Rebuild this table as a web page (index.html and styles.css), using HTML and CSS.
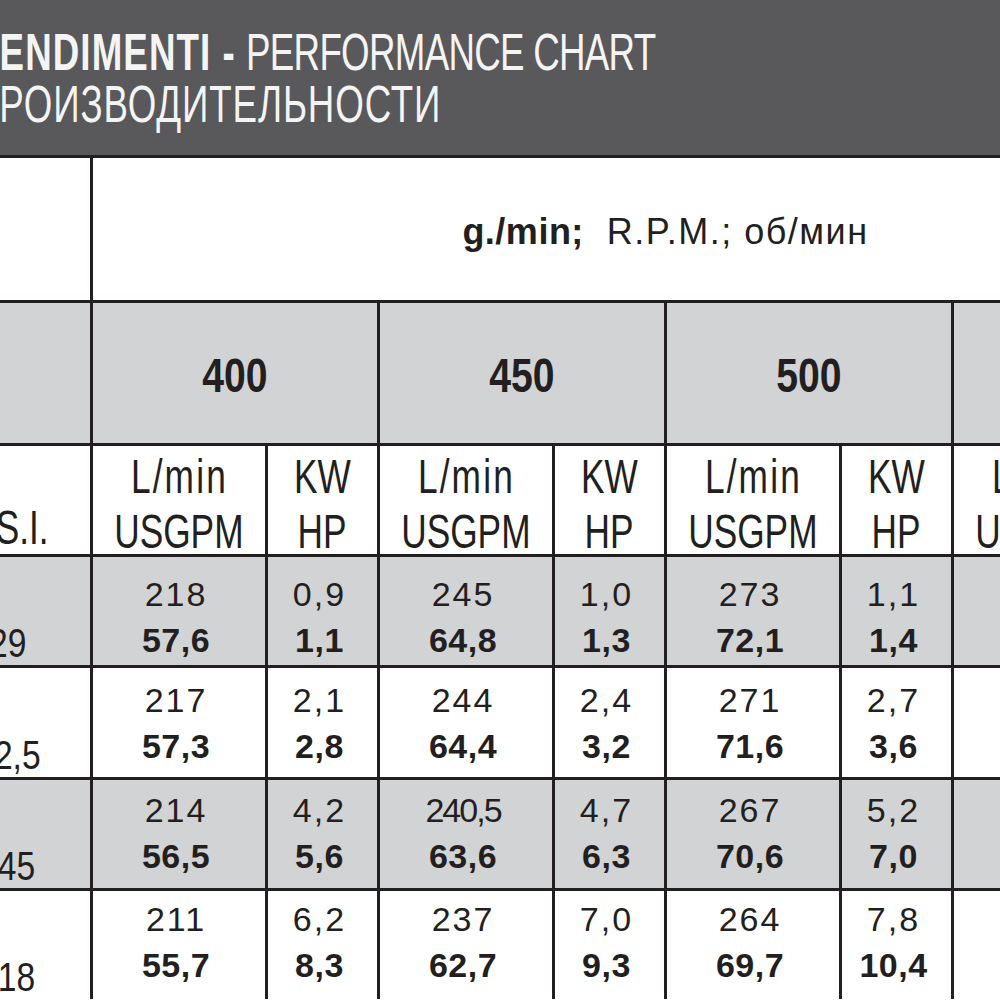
FILE: index.html
```html
<!DOCTYPE html>
<html lang="it">
<head>
<meta charset="utf-8">
<title>Rendimenti - Performance chart</title>
<link rel="stylesheet" href="styles.css">
</head>
<body>
<div class="page">
  <header class="band">
    <div class="title-line"><span class="cond"><span class="title-bold">RENDIMENTI -</span> <span class="title-light">PERFORMANCE CHART</span></span></div>
    <div class="title-line"><span class="cond"><span class="title-light cyr">ПРОИЗВОДИТЕЛЬНОСТИ</span></span></div>
  </header>

  <div class="chart">
    <!-- row: speed label -->
    <div class="cell"></div>
    <div class="cell span8 speed-label"><span><b>g./min;</b>&nbsp; R.P.M.; об/мин</span></div>

    <!-- row: rpm values -->
    <div class="cell gray"></div>
    <div class="cell gray span2 rpm"><span>400</span></div>
    <div class="cell gray span2 rpm"><span>450</span></div>
    <div class="cell gray span2 rpm"><span>500</span></div>
    <div class="cell gray span2 rpm"><span>550</span></div>

    <!-- row: units -->
    <div class="cell side unit-side"><span>P.S.I.</span></div>
    <div class="cell unit"><span class="lo">L/min</span><span>USGPM</span></div>
    <div class="cell unit"><span>KW</span><span>HP</span></div>
    <div class="cell unit"><span class="lo">L/min</span><span>USGPM</span></div>
    <div class="cell unit"><span>KW</span><span>HP</span></div>
    <div class="cell unit"><span class="lo">L/min</span><span>USGPM</span></div>
    <div class="cell unit"><span>KW</span><span>HP</span></div>
    <div class="cell unit"><span class="lo">L/min</span><span>USGPM</span></div>
    <div class="cell unit"><span>KW</span><span>HP</span></div>

    <!-- data row 1 -->
    <div class="cell gray side"><span>29</span></div>
    <div class="cell gray data r1">218<br><b>57,6</b></div>
    <div class="cell gray data r1">0,9<br><b>1,1</b></div>
    <div class="cell gray data r1">245<br><b>64,8</b></div>
    <div class="cell gray data r1">1,0<br><b>1,3</b></div>
    <div class="cell gray data r1">273<br><b>72,1</b></div>
    <div class="cell gray data r1">1,1<br><b>1,4</b></div>
    <div class="cell gray data r1">300<br><b>79,2</b></div>
    <div class="cell gray data r1">1,2<br><b>1,6</b></div>

    <!-- data row 2 -->
    <div class="cell side"><span>72,5</span></div>
    <div class="cell data r2">217<br><b>57,3</b></div>
    <div class="cell data r2">2,1<br><b>2,8</b></div>
    <div class="cell data r2">244<br><b>64,4</b></div>
    <div class="cell data r2">2,4<br><b>3,2</b></div>
    <div class="cell data r2">271<br><b>71,6</b></div>
    <div class="cell data r2">2,7<br><b>3,6</b></div>
    <div class="cell data r2">298<br><b>78,8</b></div>
    <div class="cell data r2">3,0<br><b>4,0</b></div>

    <!-- data row 3 -->
    <div class="cell gray side"><span>145</span></div>
    <div class="cell gray data r3">214<br><b>56,5</b></div>
    <div class="cell gray data r3">4,2<br><b>5,6</b></div>
    <div class="cell gray data r3"><span class="tight">240,5</span><br><b>63,6</b></div>
    <div class="cell gray data r3">4,7<br><b>6,3</b></div>
    <div class="cell gray data r3">267<br><b>70,6</b></div>
    <div class="cell gray data r3">5,2<br><b>7,0</b></div>
    <div class="cell gray data r3">294<br><b>77,7</b></div>
    <div class="cell gray data r3">5,8<br><b>7,7</b></div>

    <!-- data row 4 -->
    <div class="cell side"><span>218</span></div>
    <div class="cell data r4">211<br><b>55,7</b></div>
    <div class="cell data r4">6,2<br><b>8,3</b></div>
    <div class="cell data r4">237<br><b>62,7</b></div>
    <div class="cell data r4">7,0<br><b>9,3</b></div>
    <div class="cell data r4">264<br><b>69,7</b></div>
    <div class="cell data r4">7,8<br><b>10,4</b></div>
    <div class="cell data r4">290<br><b>76,7</b></div>
    <div class="cell data r4">8,6<br><b>11,5</b></div>
  </div>
</div>
</body>
</html>
```

FILE: styles.css
```css
html, body {
  margin: 0;
  padding: 0;
  background: #ffffff;
  overflow: hidden;
}

.page {
  margin-left: -75px;
  width: 1320px;
  color: #231f20;
}

/* ---------- title band ---------- */
.band {
  background: #59595b;
  height: 155px;
  box-sizing: border-box;
  padding: 27px 0 0 47px;
  color: #f4f4f4;
  font-family: "Liberation Sans", Arial, sans-serif;
  font-size: 51px;
  line-height: 52px;
  white-space: nowrap;
}

.cond {
  display: inline-block;
  transform: scaleX(0.72);
  transform-origin: left center;
}

.title-bold {
  font-weight: 700;
  letter-spacing: 1.5px;
}

.title-light {
  font-weight: 400;
  letter-spacing: -1px;
}

.title-light.cyr {
  letter-spacing: 1.2px;
}

/* ---------- chart grid ---------- */
.chart {
  display: grid;
  grid-template-columns: 165px repeat(4, 172px 109px);
  grid-template-rows: 142px 140px 108px 108px 109px 108px 108px;
  gap: 3px;
  padding-top: 3px;
  background: #231f20;
}

.cell {
  background: #ffffff;
  display: flex;
  justify-content: center;
  overflow: hidden;
  white-space: nowrap;
}

.cell.gray {
  background: #d1d3d4;
}

.span8 {
  grid-column: span 8;
}

.span2 {
  grid-column: span 2;
}

.speed-label {
  align-items: center;
  font-family: "Liberation Sans", Arial, sans-serif;
  font-size: 36px;
  letter-spacing: 1.5px;
  padding-top: 6px;
  box-sizing: border-box;
}

.speed-label b {
  font-weight: 700;
  letter-spacing: 0.5px;
}

.rpm {
  align-items: center;
  font-family: "Liberation Sans", Arial, sans-serif;
  font-weight: 700;
  font-size: 49px;
  padding-top: 4px;
  box-sizing: border-box;
}

.rpm span {
  display: inline-block;
  transform: scaleX(0.8);
}

/* units header */
.unit {
  flex-direction: column;
  align-items: center;
  justify-content: flex-start;
  padding-top: 3px;
  box-sizing: border-box;
  font-family: "Liberation Sans", Arial, sans-serif;
  font-size: 49px;
  line-height: 55px;
}

.unit span {
  display: block;
  transform: scaleX(0.72);
}

.unit span.lo {
  letter-spacing: 3px;
}

/* pressure column (left) */
.side {
  align-items: flex-end;
  font-family: "Liberation Sans", Arial, sans-serif;
  font-size: 41px;
  line-height: 1;
  padding-bottom: 1px;
  box-sizing: border-box;
}

.side span {
  display: inline-block;
  transform: scaleX(0.82);
}

.unit-side {
  font-size: 49px;
  padding-bottom: 2px;
}

.unit-side span {
  transform: scaleX(0.72);
}

/* data cells */
.data {
  display: block;
  text-align: center;
  box-sizing: border-box;
  padding-right: 6px;
  font-family: "Liberation Sans", Arial, sans-serif;
  font-size: 34px;
  line-height: 46px;
  letter-spacing: 2px;
}

.data b {
  font-weight: 700;
  letter-spacing: 0.5px;
}

.data .tight {
  letter-spacing: -2px;
}

.r1 { padding-top: 14px; }
.r2 { padding-top: 9px; }
.r3 { padding-top: 7px; }
.r4 { padding-top: 5px; }
```
